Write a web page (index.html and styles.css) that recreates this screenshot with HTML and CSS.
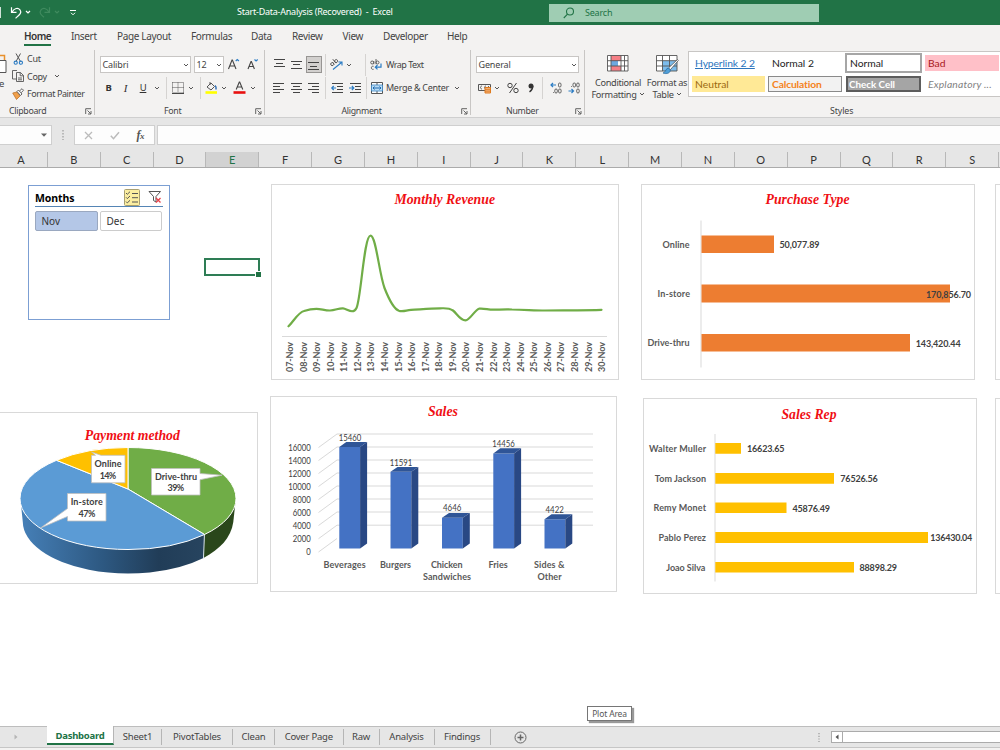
FILE: index.html
```html
<!DOCTYPE html>
<html lang="en">
<head>
<meta charset="utf-8">
<title>Start-Data-Analysis (Recovered) - Excel</title>
<link rel="stylesheet" href="styles.css">
</head>
<body>
<svg class="defs" width="0" height="0">
  <symbol id="caret" viewBox="0 0 6 6"><path d="M1 2l2 2 2-2" fill="none" stroke="#555" stroke-width="1"/></symbol>
  <symbol id="launch" viewBox="0 0 7 7"><path d="M.7 6V.7H6M2.5 2.5l3.3 3.3M6 3v3H3" fill="none" stroke="#555" stroke-width=".9"/></symbol>
</svg>

<header class="titlebar">
  <svg class="quick" width="90" height="25" viewBox="0 0 90 25" fill="none" stroke="#fff" stroke-width="1.2">
    <path d="M.2 7v11"/>
    <path d="M11.5 7.3v5h5M12 12c2.5-4 6-4.500 8-2.200 2.200 3-.5 5-4.500 8.500"/>
    <path d="M26 11l2 2 2-2"/>
    <g stroke="#3f8a5e"><path d="M49.500 7.300v5h-5M49 12c-2.500-4-6-4.500-8-2.200-2.200 3 0 5 3 7.500M55 11l2 2 2-2"/></g>
    <path d="M70 10.500h6M71 12.800l2 2 2-2" stroke-width="1"/>
  </svg>
  <div class="doc-title">Start-Data-Analysis (Recovered)&nbsp; -&nbsp; Excel</div>
  <div class="search">
    <svg width="12" height="12" viewBox="0 0 12 12" fill="none" stroke="#217346" stroke-width="1.1"><circle cx="7" cy="4.500" r="3.500"/><path d="M4.500 7.200L.8 11"/></svg>
    <span>Search</span>
  </div>
</header>

<nav class="ribbon-tabs">
  <span></span><a class="active">Home</a><a>Insert</a><a>Page Layout</a><a>Formulas</a><a>Data</a><a>Review</a><a>View</a><a>Developer</a><a>Help</a>
</nav>

<section class="ribbon">
  <div class="group clipboard">
    <div class="clip-body">
      <div class="paste">
        <svg width="8" height="24" viewBox="0 0 8 24" fill="none"><path d="M0 1.500h4.500v5" stroke="#e8912d" stroke-width="1.500"/><path d="M-1 6.500h7v12h-7" fill="#fff" stroke="#555"/></svg>
        <span>e</span>
      </div>
      <div class="clip-list">
        <div class="clip-item"><svg width="12" height="12" viewBox="0 0 12 12" fill="none"><path d="M4 .5l4.500 8M8.500 .5L4 8.500" stroke="#555"/><circle cx="3.700" cy="9.700" r="1.600" stroke="#2b7cc4" stroke-width="1.100"/><circle cx="8.900" cy="9.700" r="1.600" stroke="#2b7cc4" stroke-width="1.100"/></svg><span>Cut</span></div>
        <div class="clip-item"><svg width="12" height="12" viewBox="0 0 12 12" fill="#f3f2f1" stroke="#555" stroke-width=".9"><path d="M5 9H.5V.5H5"/><path d="M4.500 2.500h4L11.500 5.500v6h-7zM8.200 2.500v3.300h3.300M6 8h4M6 9.800h4"/></svg><span>Copy</span><svg class="gapcaret" width="6" height="6"><use href="#caret"/></svg></div>
        <div class="clip-item"><svg width="12" height="12" viewBox="0 0 12 12"><path d="M.7 5L5 4l3 4-3.500 3.500z" fill="#f0a04b" stroke="#b86a20" stroke-width=".7"/><path d="M5 3.500L6.500 2l3.500 4-1.500 1.500zM7.500 3L10 .7l1.500 1.500-2.200 2.500" fill="#fff" stroke="#555" stroke-width=".9"/></svg><span class="t-fp">Format Painter</span></div>
      </div>
    </div>
    <div class="caption cap-clip"><span>Clipboard</span><svg width="7" height="7"><use href="#launch"/></svg></div>
  </div>

  <div class="group font">
    <div class="row font1">
      <div class="combo"><span>Calibri</span><svg width="6" height="6"><use href="#caret"/></svg></div>
      <div class="combo"><span>12</span><svg width="6" height="6"><use href="#caret"/></svg></div>
      <svg width="13" height="13" viewBox="0 0 13 13" fill="none"><path d="M1.500 11L5 2h.4L9 11M2.800 8h5" stroke="#444" stroke-width="1.100"/><path d="M8.700 3l1.600-1.500L11.900 3" stroke="#2b7cc4" stroke-width="1.200"/></svg>
      <svg width="13" height="13" viewBox="0 0 13 13" fill="none"><path d="M1 11l3-7.500h.4l3 7.500M2.200 8.500h4" stroke="#444" stroke-width="1.100"/><path d="M7.500 1.500L9.100 3l1.600-1.500" stroke="#2b7cc4" stroke-width="1.200"/></svg>
    </div>
    <div class="row font2">
      <b>B</b><i>I</i><u>U</u><svg width="6" height="6"><use href="#caret"/></svg><hr>
      <svg width="12" height="12" viewBox="0 0 12 12" fill="none" stroke="#555"><path d="M.5.5h11v10M.5.5v10M6 .5v10M.5 5.500h11" stroke-dasharray="1 1"/><path d="M0 11.300h12" stroke="#333" stroke-width="1.200"/></svg>
      <svg width="6" height="6"><use href="#caret"/></svg><hr>
      <svg width="13" height="13" viewBox="0 0 13 13" fill="none"><path d="M2 6l4-4 3.500 3.500L6 9zM5 1v3" stroke="#555"/><path d="M10 4.500c1.500 1 1.200 2.500 1 4" stroke="#2b6cb4" stroke-width="1.500"/><path d="M.5 11.500h11.500" stroke="#ffff00" stroke-width="2.600"/></svg>
      <svg width="6" height="6"><use href="#caret"/></svg>
      <svg width="13" height="13" viewBox="0 0 13 13" fill="none"><path d="M3.200 8.500L6.300 1h.4l3.100 7.500M4.300 6h4.400" stroke="#444" stroke-width="1.100"/><path d="M.5 11.500h12" stroke="#e81010" stroke-width="2.600"/></svg>
      <svg width="6" height="6"><use href="#caret"/></svg>
    </div>
    <div class="caption cap-font"><span>Font</span><svg width="7" height="7"><use href="#launch"/></svg></div>
  </div>

  <div class="group align">
    <div class="row al1">
      <svg width="11" height="12" viewBox="0 0 11 12" stroke="#444" shape-rendering="crispEdges"><path d="M0 .5h11M2 4.500h7M0 7.500h11"/></svg>
      <svg width="11" height="12" viewBox="0 0 11 12" stroke="#444" shape-rendering="crispEdges"><path d="M0 2.500h11M2 5.500h7M0 9.500h11"/></svg>
      <span class="pressed"><svg width="11" height="12" viewBox="0 0 11 12" stroke="#444" shape-rendering="crispEdges"><path d="M0 5.500h11M2 9.500h7M0 12.500h11"/></svg></span>
      <hr>
      <svg width="13" height="12" viewBox="0 0 13 12" fill="none"><path d="M2 9.500l8.500-7M7.500 2H11v3.500" transform="translate(1 1)" stroke="#2b7cc4" stroke-width="1.100"/><g transform="rotate(-38 4 5)" stroke="#555" stroke-width=".9"><circle cx="2.500" cy="4" r="1.500"/><path d="M4 2.500v3M6 .5v5"/><circle cx="7.500" cy="4" r="1.500"/></g></svg>
      <svg width="6" height="6"><use href="#caret"/></svg><hr class="end">
      <svg width="12" height="12" viewBox="0 0 12 12" fill="none" stroke="#555" stroke-width=".9"><circle cx="2.200" cy="3.500" r="1.500"/><path d="M3.800 2v3.200M6 0v5.200M3.600 7.300c-3-.8-3 3.800 0 3"/><circle cx="7.500" cy="3.500" r="1.500"/><path d="M11 4.500v3.700H5.500M7.500 6L5.300 8.200l2.200 2.200" stroke="#2b7cc4" stroke-width="1.200"/></svg>
      <span class="lbl">Wrap Text</span>
    </div>
    <div class="row al2">
      <svg width="11" height="12" viewBox="0 0 11 12" stroke="#444" shape-rendering="crispEdges"><path d="M0 1.500h11M0 4.500h7M0 7.500h11M0 10.500h7"/></svg>
      <svg width="11" height="12" viewBox="0 0 11 12" stroke="#444" shape-rendering="crispEdges"><path d="M0 1.500h11M2 4.500h7M0 7.500h11M2 10.500h7"/></svg>
      <svg width="11" height="12" viewBox="0 0 11 12" stroke="#444" shape-rendering="crispEdges"><path d="M0 1.500h11M4 4.500h7M0 7.500h11M4 10.500h7"/></svg>
      <hr>
      <svg width="12" height="12" viewBox="0 0 12 12" fill="none"><path d="M1 1.500h11M6 4.500h6M6 7.500h6M1 10.500h11" stroke="#444"/><path d="M5 6H1M2.700 4L.8 6l1.900 2" stroke="#2b7cc4" stroke-width="1.200"/></svg>
      <svg width="12" height="12" viewBox="0 0 12 12" fill="none"><path d="M1 1.500h11M6 4.500h6M6 7.500h6M1 10.500h11" stroke="#444"/><path d="M0 6h4.500M2.900 4l1.900 2-1.900 2" stroke="#2b7cc4" stroke-width="1.200"/></svg>
      <hr>
      <svg width="12" height="12" viewBox="0 0 12 12" fill="none"><path d="M.5.500h11v11H.5zM6 .5v11" fill="#fff" stroke="#555"/><path d="M.5 3h11v6H.5z" fill="#b9dcf5" stroke="#3a87c4" stroke-width=".8"/><path d="M2 6h8M3.500 4.500L2 6l1.500 1.500M8.500 4.500L10 6 8.500 7.500" stroke="#1f6bb0"/></svg>
      <span class="lbl">Merge &amp; Center</span>
      <svg width="6" height="6"><use href="#caret"/></svg>
    </div>
    <div class="caption cap-align"><span>Alignment</span><svg width="7" height="7"><use href="#launch"/></svg></div>
  </div>

  <div class="group number">
    <div class="row nu1"><div class="combo"><span>General</span><svg width="6" height="6"><use href="#caret"/></svg></div></div>
    <div class="row nu2">
      <svg width="13" height="12" viewBox="0 0 13 12" fill="none"><path d="M.5 2.500h12v6H.5z" stroke="#555"/><path d="M4 4c-2 0-2 3 0 3M8 4c-2 0-2 3 0 3M10.500 4v3" stroke="#555" stroke-width=".9"/><path d="M7 5.500h5.500v5.500H7z" fill="#f3b27a" stroke="#e07b1e"/><path d="M7 7.400h5.500M7 9.200h5.500" stroke="#e07b1e" stroke-width=".8"/></svg>
      <svg width="6" height="6"><use href="#caret"/></svg>
      <svg width="12" height="12" viewBox="0 0 12 12" fill="none" stroke="#444"><circle cx="3" cy="3.500" r="2.200"/><circle cx="9" cy="8.500" r="2.200"/><path d="M9.500 1L2.500 11"/></svg>
      <svg width="8" height="12" viewBox="0 0 8 12"><circle cx="4" cy="4" r="2.500" fill="#333"/><path d="M5.700 4c0 3-1.200 4.600-3.200 5.800" fill="none" stroke="#333" stroke-width="1.500"/></svg>
      <hr>
      <svg width="12" height="12" viewBox="0 0 12 12" fill="none" stroke="#555" stroke-width=".9"><path d="M6 3H1M3 1L1 3l2 2" stroke="#2b7cc4" stroke-width="1.200"/><rect x="8.500" y="1" width="2.500" height="4" rx="1.200"/><rect x="4.800" y="7" width="2.500" height="4" rx="1.200"/><rect x="8.600" y="7" width="2.500" height="4" rx="1.200"/><path d="M3 10.500h.8"/></svg>
      <svg width="12" height="12" viewBox="0 0 12 12" fill="none" stroke="#555" stroke-width=".9"><path d="M.5 9h5M3.500 7l2 2-2 2" stroke="#2b7cc4" stroke-width="1.200"/><rect x="5" y="1" width="2.500" height="4" rx="1.200"/><rect x="8.700" y="1" width="2.500" height="4" rx="1.200"/><rect x="8.700" y="7" width="2.500" height="4" rx="1.200"/><path d="M3 4.500h.8"/></svg>
    </div>
    <div class="caption cap-num"><span>Number</span><svg width="7" height="7"><use href="#launch"/></svg></div>
  </div>

  <div class="group styles">
    <div class="styles-body">
      <div class="big cond">
        <svg width="22" height="19" viewBox="0 0 22 19"><path d="M.5 1.500h20.500v15.500H.5z" fill="#fff"/><path d="M4 1.500h10V7H4zM4 12h10v5H4z" fill="#f57f86"/><path d="M4 7h7v5H4z" fill="#6fa9e0"/><path d="M11 7h3v5h-3z" fill="#fff"/><path d="M.5 1.500h20.500v15.500H.5zM.5 6.700H21M.5 12H21M4 1.500V17M14 1.500V17M17.500 1.500V17" fill="none" stroke="#555" stroke-width=".9"/></svg>
        <span>Conditional</span><span>Formatting <svg width="6" height="6"><use href="#caret"/></svg></span>
      </div>
      <div class="big fmt">
        <svg width="23" height="19" viewBox="0 0 23 19"><path d="M.5 1.500h20.500v15.500H.5z" fill="#fff"/><path d="M6.500 6.700H21V17H6.500z" fill="#7cbcec"/><path d="M.5 1.500h20.500v15.500H.5zM.5 6.700H21M.5 12H21M6.500 1.500V17M13.500 1.500V17" fill="none" stroke="#555" stroke-width=".9"/><path d="M21.500 5.500L12.500 14l1.800 1.800 8-9.300z" fill="#fff" stroke="#555" stroke-width=".8"/><path d="M12.500 14c-3 0-2 4-5.500 5 4 1.500 7.500 0 7.300-3.200z" fill="#4f9fd8" stroke="#23679f" stroke-width=".7"/></svg>
        <span>Format as</span><span>Table <svg width="6" height="6"><use href="#caret"/></svg></span>
      </div>
      <div class="gallery">
        <div class="st hyper"><span>Hyperlink 2 2</span></div><div class="st n2"><span>Normal 2</span></div><div class="st normal"><span>Normal</span></div><div class="st bad"><span>Bad</span></div>
        <div class="st neutral"><span>Neutral</span></div><div class="st calc"><span>Calculation</span></div><div class="st check"><span>Check Cell</span></div><div class="st expl"><span>Explanatory ...</span></div>
      </div>
    </div>
    <div class="caption cap-styles"><span>Styles</span></div>
  </div>
</section>

<section class="formula-bar">
  <div class="namebox"><svg width="6" height="4" viewBox="0 0 6 4"><path d="M0 .5h6L3 3.800z" fill="#666"/></svg></div>
  <svg width="4" height="10" viewBox="0 0 4 10"><path d="M2 0v10" stroke="#aaa" stroke-width="1.500" stroke-dasharray="1.500 1.500"/></svg>
  <div class="fx">
    <svg width="9" height="9" viewBox="0 0 9 9"><path d="M1 1l7 7M8 1L1 8" stroke="#bbb" stroke-width="1.300"/></svg>
    <svg width="10" height="9" viewBox="0 0 10 9"><path d="M.8 4.800l2.700 2.900L9 1.200" fill="none" stroke="#bbb" stroke-width="1.500"/></svg>
    <em>f<small>x</small></em>
  </div>
  <div class="formula"></div>
</section>

<div class="columns">
  <span>A</span><span>B</span><span>C</span><span>D</span><span class="sel">E</span><span>F</span><span>G</span><span>H</span><span>I</span><span>J</span><span>K</span><span>L</span><span>M</span><span>N</span><span>O</span><span>P</span><span>Q</span><span>R</span><span>S</span><span></span>
</div>

<main class="sheet">
  <div class="slicer">
    <div class="slicer-head">
      <b>Months</b>
      <svg width="16" height="17" viewBox="0 0 16 17" fill="none"><rect x=".5" y=".5" width="15" height="16" rx="1" fill="#fbeea0" stroke="#a89f72"/><path d="M2 4l1.300 1.300L6 2.700M2 8.300l1.300 1.300L6 7M2 12.600l1.300 1.300L6 11.300M8 4.500h6M8 8.700h6M8 13h6" stroke="#555"/></svg>
      <svg width="14" height="14" viewBox="0 0 14 14" fill="none"><path d="M1 1.500h11.500L8 6.500V12L5.500 10.500v-4z" stroke="#555"/><path d="M8 8l4.500 4.500M12.500 8L8 12.500" stroke="#e8414a" stroke-width="1.300"/></svg>
    </div>
    <div class="slicer-items"><span class="on">Nov</span><span>Dec</span></div>
  </div>

  <div class="cell-cursor"></div>

  <svg class="chart revenue" viewBox="271 184 348 196">
    <text class="ct" x="394.500" y="204.300" textLength="100.500" lengthAdjust="spacingAndGlyphs">Monthly Revenue</text>
    <path d="M282 336.500h325" stroke="#d9d9d9"/>
    <path d="M288.500 326.300C294 321 298 312.500 304 311C309 309.300 313 308.800 316.500 308.800C321 308.800 325 310.600 330 310.500C335 310.400 339 308 343 308.300C347 308.600 353 315 356.500 308C361 299 364 235.700 370.500 235.700C376 235.700 379 273 384.500 288C388 297 394 309 399 310.800C404 311.800 406 310.200 411 309.900C420 309.400 430 308.400 440 308.300C445 308.300 449 307.600 453 310.500C457 313.500 460 320.300 465.500 320.300C470 320.300 475 309.600 479 308.700C483 308 488 309.600 493 309.700C500 309.600 505 309.200 512 309.500C525 309.700 535 310.500 545 310.500C560 310.300 590 310.300 601.500 309.800" fill="none" stroke="#70ad47" stroke-width="2.200" stroke-linecap="round"/>
    <g class="days">
      <text transform="translate(293 372) rotate(-90)" textLength="30">07-Nov</text>
      <text transform="translate(306.600 372) rotate(-90)" textLength="30">08-Nov</text>
      <text transform="translate(320.100 372) rotate(-90)" textLength="30">09-Nov</text>
      <text transform="translate(333.700 372) rotate(-90)" textLength="30">10-Nov</text>
      <text transform="translate(347.300 372) rotate(-90)" textLength="30">11-Nov</text>
      <text transform="translate(360.800 372) rotate(-90)" textLength="30">12-Nov</text>
      <text transform="translate(374.400 372) rotate(-90)" textLength="30">13-Nov</text>
      <text transform="translate(388 372) rotate(-90)" textLength="30">14-Nov</text>
      <text transform="translate(401.500 372) rotate(-90)" textLength="30">15-Nov</text>
      <text transform="translate(415.100 372) rotate(-90)" textLength="30">16-Nov</text>
      <text transform="translate(428.700 372) rotate(-90)" textLength="30">17-Nov</text>
      <text transform="translate(442.200 372) rotate(-90)" textLength="30">18-Nov</text>
      <text transform="translate(455.800 372) rotate(-90)" textLength="30">19-Nov</text>
      <text transform="translate(469.400 372) rotate(-90)" textLength="30">20-Nov</text>
      <text transform="translate(482.900 372) rotate(-90)" textLength="30">21-Nov</text>
      <text transform="translate(496.500 372) rotate(-90)" textLength="30">22-Nov</text>
      <text transform="translate(510.100 372) rotate(-90)" textLength="30">23-Nov</text>
      <text transform="translate(523.600 372) rotate(-90)" textLength="30">24-Nov</text>
      <text transform="translate(537.200 372) rotate(-90)" textLength="30">25-Nov</text>
      <text transform="translate(550.800 372) rotate(-90)" textLength="30">26-Nov</text>
      <text transform="translate(564.300 372) rotate(-90)" textLength="30">27-Nov</text>
      <text transform="translate(577.900 372) rotate(-90)" textLength="30">28-Nov</text>
      <text transform="translate(591.500 372) rotate(-90)" textLength="30">29-Nov</text>
      <text transform="translate(605 372) rotate(-90)" textLength="30">30-Nov</text>
    </g>
  </svg>

  <svg class="chart purchase" viewBox="641 184 334 196">
    <text class="ct" x="765.500" y="204.300" textLength="84" lengthAdjust="spacingAndGlyphs">Purchase Type</text>
    <path d="M701 220.500v147" stroke="#d9d9d9"/>
    <g fill="#ed7d31"><path d="M701.500 235.500h72.500v17.500h-72.500zM701.500 284.500H950v18H701.500zM701.500 334H910v17.500H701.500z"/></g>
    <g class="cat">
      <text x="662.500" y="247.700" textLength="27">Online</text>
      <text x="657.500" y="297" textLength="32.500">In-store</text>
      <text x="647.500" y="346" textLength="42">Drive-thru</text>
    </g>
    <g class="val">
      <text x="779.500" y="248.300" textLength="40">50,077.89</text>
      <text x="926" y="297.500" textLength="45">170,856.70</text>
      <text x="915.700" y="346.700" textLength="45">143,420.44</text>
    </g>
  </svg>

  <svg class="chart sales" viewBox="270 396 347 196">
    <text class="ct" x="428" y="416.300" textLength="30" lengthAdjust="spacingAndGlyphs">Sales</text>
    <path d="M318.500 447.500l18.500-13.500h256M318.500 460.500l18.500-13.500h256M318.500 473.500l18.500-13.500h256M318.500 486.500l18.500-13.500h256M318.500 499.500l18.500-13.500h256M318.500 512.500l18.500-13.500h256M318.500 525.500l18.500-13.500h256M318.500 538.700l18.500-13.500h256M318.500 552l18.500-13.500" fill="none" stroke="#d9d9d9"/>
    <path fill="#4472c4" d="M339.300 447h20.800v101.500h-20.800zM390.500 471.800h20.800v76.700h-20.800zM442 517.800h20.800v30.700H442zM493.300 453.500h20.800v95h-20.800zM544.500 519.300h20.800v29.200h-20.800z"/>
    <path fill="#2f5597" d="M339.300 447l7-5h20.800l-7 5zM390.500 471.800l7-4.800h20.800l-7 4.800zM442 517.800l7-4.800h20.800l-7 4.800zM493.300 453.500l7-5.200h20.800l-7 5.200zM544.500 519.300l7-5h20.800l-7 5z"/>
    <path fill="#294884" d="M360.100 447l7-5v101.500l-7 5zM411.300 471.800l7-4.800v76.500l-7 5zM462.800 517.800l7-4.800v30.500l-7 5zM514.100 453.500l7-5.200v95.200l-7 5zM565.300 519.300l7-5v29.200l-7 5z"/>
    <g class="axis">
      <text x="288.300" y="451" textLength="22.500" lengthAdjust="spacingAndGlyphs">16000</text>
      <text x="288.300" y="463.500" textLength="22.500" lengthAdjust="spacingAndGlyphs">14000</text>
      <text x="288.300" y="476.500" textLength="22.500" lengthAdjust="spacingAndGlyphs">12000</text>
      <text x="288.300" y="489.700" textLength="22.500" lengthAdjust="spacingAndGlyphs">10000</text>
      <text x="292.800" y="502.800" textLength="18" lengthAdjust="spacingAndGlyphs">8000</text>
      <text x="292.800" y="515.800" textLength="18" lengthAdjust="spacingAndGlyphs">6000</text>
      <text x="292.800" y="529" textLength="18" lengthAdjust="spacingAndGlyphs">4000</text>
      <text x="292.800" y="541.800" textLength="18" lengthAdjust="spacingAndGlyphs">2000</text>
      <text x="306.300" y="555.200" textLength="4.500" lengthAdjust="spacingAndGlyphs">0</text>
      <text x="338.700" y="440.600" textLength="22.500" lengthAdjust="spacingAndGlyphs">15460</text>
      <text x="389.800" y="465.600" textLength="22.500" lengthAdjust="spacingAndGlyphs">11591</text>
      <text x="443" y="511.400" textLength="18.300" lengthAdjust="spacingAndGlyphs">4646</text>
      <text x="492.300" y="447.400" textLength="22.500" lengthAdjust="spacingAndGlyphs">14456</text>
      <text x="545.500" y="512.600" textLength="18.300" lengthAdjust="spacingAndGlyphs">4422</text>
    </g>
    <g class="cat">
      <text x="323.600" y="568.200" textLength="42">Beverages</text>
      <text x="380" y="568.200" textLength="31">Burgers</text>
      <text x="431" y="568.200" textLength="31.500">Chicken</text>
      <text x="423" y="580" textLength="48">Sandwiches</text>
      <text x="488.500" y="568.200" textLength="19.200">Fries</text>
      <text x="534" y="568.200" textLength="30.500">Sides &amp;</text>
      <text x="537.500" y="580" textLength="24">Other</text>
    </g>
  </svg>

  <svg class="chart rep" viewBox="643 398 334 196">
    <text class="ct" x="781.500" y="418.500" textLength="55" lengthAdjust="spacingAndGlyphs">Sales Rep</text>
    <path d="M715 434v147.500" stroke="#d9d9d9"/>
    <path fill="#ffc000" d="M715.300 443H741v10.700h-25.700zM715.300 473H834v10.700H715.300zM715.300 502.500h71.200v10.500h-71.200zM715.300 532H928v11H715.300zM715.300 562H854v10.500H715.300z"/>
    <g class="cat">
      <text x="649" y="451.500" textLength="57">Walter Muller</text>
      <text x="654.800" y="481.700" textLength="51.200">Tom Jackson</text>
      <text x="653.500" y="511" textLength="52.500">Remy Monet</text>
      <text x="658.500" y="540.500" textLength="47.500">Pablo Perez</text>
      <text x="666.300" y="570.500" textLength="39">Joao Silva</text>
    </g>
    <g class="val">
      <text x="747" y="452.200" textLength="37.500">16623.65</text>
      <text x="840.300" y="482.200" textLength="37.500">76526.56</text>
      <text x="792.500" y="511.700" textLength="37.500">45876.49</text>
      <text x="930.300" y="541.200" textLength="42">136430.04</text>
      <text x="859.500" y="571.200" textLength="37.500">88898.29</text>
    </g>
  </svg>

  <svg class="chart payment" viewBox="-1 412 259 172">
    <defs>
      <linearGradient id="rim" x1="20" x2="205" y1="0" y2="0" gradientUnits="userSpaceOnUse"><stop offset="0" stop-color="#4680b8"/><stop offset=".45" stop-color="#2d5881"/><stop offset=".75" stop-color="#213d58"/><stop offset="1" stop-color="#27445f"/></linearGradient>
    </defs>
    <text class="ct" x="84.800" y="439.800" textLength="95" lengthAdjust="spacingAndGlyphs">Payment method</text>
    <path d="M20.500 500L22.800 522A105.500 52 0 0 0 203.500 558L205 530z" fill="url(#rim)"/>
    <path d="M204.500 530L203.500 558C220 549 231 538 233.300 522L235.700 500z" fill="#2a471b"/>
    <path d="M204.500 533L203.500 558" stroke="#d7e3ee"/>
    <g stroke="#fff" stroke-width="1">
      <path d="M128 489V447.500A108 51 0 0 1 236 498.500A108 51 0 0 1 204.500 534.500z" fill="#70ad47"/>
      <path d="M128 489L204.500 534.500A108 51 0 0 1 128 549.500A108 51 0 0 1 20 498.500A108 51 0 0 1 56.500 460.300z" fill="#5b9bd5"/>
      <path d="M128 489L56.500 460.300A108 51 0 0 1 128 447.500z" fill="#ffc000"/>
    </g>
    <g fill="#fff" stroke="#bfbfbf" stroke-width=".8">
      <path d="M91.500 455.300h4L91.500 452l9.500 3.300h24v27.500H91.500z"/>
      <path d="M151.500 468.500H200v5l22 1.700-22 4.500v15.300h-48.500z"/>
      <path d="M67.500 493.500H106v27.500H67.500v-4.500L40.500 528l27-19.500z"/>
    </g>
    <g class="cat dark">
      <text x="94.500" y="467" textLength="27">Online</text>
      <text x="99.700" y="478.800" textLength="16.500">14%</text>
      <text x="155" y="479.500" textLength="42">Drive-thru</text>
      <text x="167.500" y="491.300" textLength="16.700">39%</text>
      <text x="70.700" y="505.300" textLength="32">In-store</text>
      <text x="78.500" y="517" textLength="17">47%</text>
    </g>
  </svg>

  <div class="edge upper"></div>
  <div class="edge lower"></div>
  <div class="tooltip">Plot Area</div>
</main>

<footer class="sheet-tabs">
  <span class="nav"><svg width="4" height="6" viewBox="0 0 4 6"><path d="M.5.5L3.500 3l-3 2.500z" fill="#b5b5b5"/></svg></span>
  <span class="cur">Dashboard</span><span>Sheet1</span><span>PivotTables</span><span>Clean</span><span>Cover Page</span><span>Raw</span><span>Analysis</span><span>Findings</span>
  <div class="add"><svg width="13" height="13" viewBox="0 0 13 13" fill="none" stroke="#666"><circle cx="6.500" cy="6.500" r="5.500"/><path d="M3.500 6.500h6M6.500 3.500v6" stroke-width="1.500"/></svg></div>
  <svg width="4" height="9" viewBox="0 0 4 9"><path d="M2 0v9" stroke="#999" stroke-width="1.200" stroke-dasharray="1.200 1.500"/></svg>
  <div class="scroll"><div class="arrow"><svg width="4" height="6" viewBox="0 0 4 6"><path d="M3.500.5L.5 3l3 2.500z" fill="#555"/></svg></div></div>
</footer>
</body>
</html>
```

FILE: styles.css
```css
* { box-sizing: border-box; }
html, body { margin: 0; }
body {
  width: 1000px; height: 750px; overflow: hidden;
  display: flex; flex-direction: column;
  background: #f3f2f1;
  font-family: "Noto Sans", "Open Sans", sans-serif;
  font-size: 9.500px; color: #444; letter-spacing: -.2px;
  white-space: nowrap;
}
svg { display: block; flex: none; overflow: visible; }
.defs { position: absolute; }
hr { width: 1px; height: 22px; margin: 0; border: 0; background: #d5d3d1; }

.titlebar {
  height: 25px; flex: none; background: #217346; color: #fff;
  display: grid; grid-template-columns: 237px 312px 270px; align-items: center;
}
.doc-title { font-size: 9px; letter-spacing: -.24px; margin-top: -2px; }
.search {
  height: 18px; background: #9fcdb3; color: #217346;
  display: flex; align-items: center; gap: 10px; padding-left: 14px; font-size: 9px;
}

.ribbon-tabs {
  height: 25px; flex: none; display: grid; font-size: 10px; letter-spacing: -.35px;
  grid-template-columns: 24px 47px 46px 74px 60px 41px 50.500px 40.500px 64px 60px;
  align-items: start; padding-top: 2px;
}
.ribbon-tabs a { line-height: 19px; justify-self: start; }
.ribbon-tabs .active { color: #333; font-weight: 600; border-bottom: 2px solid #217346; line-height: 17px; height: 18px; margin-top: 1px; letter-spacing: -.55px; }

.ribbon {
  height: 68px; flex: none; display: grid; border-bottom: 1px solid #cfcfcf;
  grid-template-columns: 95px 170px 206px 114px 415px; letter-spacing: -.3px;
}
.group { height: 65px; display: flex; flex-direction: column; border-right: 1px solid #c8c6c4; min-width: 0; }
.group.styles { border-right: 0; }
.row { display: grid; align-items: center; justify-items: center; height: 23px; }
.caption { margin-top: auto; height: 13px; line-height: 13px; font-size: 8.800px; display: flex; align-items: center; justify-content: space-between; margin-bottom: -3px; padding-right: 2px; }
.cap-clip { padding-left: 9px; }
.cap-font { padding-left: 69px; }
.cap-align { padding-left: 76.500px; }
.cap-num { padding-left: 35px; }
.cap-styles { padding-left: 245px; letter-spacing: -.1px; }

.clip-body { display: flex; }
.paste { width: 12px; padding-top: 4px; line-height: 9px; }
.paste span { display: block; margin-top: 1px; margin-left: -1px; }
.clip-list { display: flex; flex-direction: column; }
.clip-item { height: 17.500px; display: flex; align-items: center; gap: 3px; font-size: 9px; }
.gapcaret { margin-left: 4px; }
.t-fp { letter-spacing: -.42px; }

.combo { justify-self: stretch; height: 17px; background: #fff; border: 1px solid #c8c6c4; display: flex; align-items: center; justify-content: space-between; padding: 0 1px 0 1.500px; font-size: 9px; letter-spacing: -.15px; }
.font1 { margin-top: 3px; padding-left: 5px; grid-template-columns: 91px 30px 13px 13px; column-gap: 3px; justify-content: start; }
.font1 svg:last-child { margin-left: 8px; }
.font2 { padding-left: 5px; font-size: 9.500px; color: #333; justify-content: start;
  grid-template-columns: 17px 17px 18px 9px 11px 11px 15px 5px 17px 8px 23px 4px; }
.font2 i { font-family: "Liberation Serif", serif; font-size: 11px; }
.al1, .al2 { justify-content: start; padding-left: 5px; grid-template-columns: 18px 17px 17.500px 5px 18.500px 5px 15px 20px auto; }
.al1 { margin-top: 3px; }
.al1 .end { justify-self: end; }
.al2 { grid-template-columns: 18px 17px 18px 5px 18px 18px 5px 16px 69px auto; padding-left: 4.500px; }
.al1 .lbl, .al2 .lbl { justify-self: start; font-size: 9px; }
.al2 .lbl { padding-left: 1.500px; }
.al1 .lbl { letter-spacing: -.5px; }
.pressed { width: 16px; height: 17px; background: #d2d0ce; border: 1px solid #979593; padding: 0 0 0 1.500px; }
.number .nu1 { margin-top: 3px; padding-left: 5px; padding-right: 5px; }
.nu2 { justify-content: start; padding-left: 6px; grid-template-columns: 15px 10px 22px 14px 9px 18px 18px; }
.nu1 { grid-template-columns: 103px; }

.styles-body { display: grid; grid-template-columns: 60px 38px 1fr; padding-left: 3px; }
.big { display: flex; flex-direction: column; align-items: center; padding-top: 4px; font-size: 9.200px; letter-spacing: -.3px; }
.big > svg { margin-bottom: 4px; height: 19px; }
.big span { line-height: 11.500px; display: flex; align-items: center; gap: 2px; }
.gallery {
  margin: 1px 0 0 2px; height: 46px; background: #fff; border: 1px solid #c8c6c4; border-right: 0;
  display: grid; grid-template-columns: 73px 74px 77px 74px; grid-template-rows: 19px 17px; column-gap: 3px; row-gap: 3px; padding: 2px 0 0 3px;
  font-family: Lato, sans-serif; font-size: 10.300px; color: #222; letter-spacing: 0;
}
.st { display: flex; align-items: center; padding-left: 3px; margin: 0 0 1px; }
.st.hyper span { color: #2b74bd; text-decoration: underline; letter-spacing: -.1px; }
.n2 { padding-left: 4px; }
.normal { border: 2px solid #a6a6a6; margin: -1px 0 0; }
.bad { background: #ffc0c8; color: #a81820; margin: 1px 0 2px; }
.neutral { background: #ffe996; color: #9c6a10; }
.calc { background: #f2f2f2; border: 1px solid #8a8a8a; color: #f58220; font-weight: bold; letter-spacing: -.15px; }
.check { background: #a5a5a5; border: 2px solid #5d5d5d; color: #fff; font-weight: bold; font-size: 9.800px; padding-left: 1px; margin-left: 1px; margin-right: 1px; }
.expl { color: #7f7f7f; font-style: italic; letter-spacing: .2px; }

.formula-bar { height: 34px; flex: none; background: #e6e6e6; display: grid; grid-template-columns: 52px 22px 81px 2px 1fr; align-items: center; justify-items: center; }
.namebox, .fx, .formula { height: 20px; justify-self: stretch; background: #fdfdfd; border: 1px solid #cfcfcf; display: flex; align-items: center; }
.namebox { border-left: 0; justify-content: flex-end; padding-right: 4px; }
.fx { justify-content: space-between; padding: 0 10px 0 9px; }
.fx em { font: italic 600 12px "Liberation Serif", serif; color: #555; line-height: 12px; letter-spacing: -.5px; }
.fx small { font-size: 9px; }
.formula { grid-column: 5; border-right: 0; }

.columns {
  height: 15.500px; flex: none; background: #e6e6e6; border-bottom: 1px solid #ababab;
  display: grid; grid-template-columns: repeat(20, 52.850px); margin-left: -5px; width: 1010px; overflow: hidden;
}
.columns span { border-right: 1px solid #b8b8b8; text-align: center; font: 11px/16px Lato, sans-serif; color: #333; letter-spacing: 0; }
.columns .sel { background: #d2d2d2; color: #217346; border-bottom: 2px solid #217346; }

.sheet { height: 558.500px; flex: none; background: #fff; position: relative; overflow: hidden; }
.chart { position: absolute; outline: 1px solid #d9d9d9; outline-offset: -1px; background: #fff; }
.revenue { left: 271px; top: 16.500px; width: 348px; height: 196px; }
.purchase { left: 641px; top: 16.500px; width: 334px; height: 196px; }
.sales { left: 270px; top: 228.500px; width: 347px; height: 196px; }
.rep { left: 643px; top: 230.500px; width: 334px; height: 196px; }
.payment { left: -1px; top: 244.500px; width: 259px; height: 172px; }
.edge { position: absolute; left: 995px; width: 10px; height: 196px; border: 1px solid #d9d9d9; }
.upper { top: 16.500px; }
.lower { top: 230px; }
.ct { font: italic bold 14px "Liberation Serif", serif; fill: #f00f14; letter-spacing: 0; }
.cat, .val, .axis, .days { font: bold 9px Lato, sans-serif; fill: #595959; letter-spacing: 0; }
.val, .dark { fill: #404040; }
.axis { font-weight: normal; fill: #404040; }

.slicer { position: absolute; left: 28px; top: 17.500px; width: 142px; height: 135px; border: 1px solid #7c9fd3; padding: 3px 6px; }
.slicer-head { height: 18px; border-bottom: 1px solid #5585b5; display: grid; grid-template-columns: 89px 24px 14px; align-items: center; color: #000; font-size: 10.500px; letter-spacing: -.1px; }
.slicer-head svg { margin-top: -1px; }
.slicer-items { display: grid; grid-template-columns: 63px 62px; column-gap: 2px; padding-top: 4px; font-size: 10px; color: #333; }
.slicer-items span { height: 20px; line-height: 18px; border: 1px solid #ccc; border-radius: 2px; padding-left: 5.500px; letter-spacing: 0; }
.slicer-items .on { background: #b4c7e7; border-color: #9aa8c0; }

.cell-cursor { position: absolute; left: 204px; top: 90.500px; width: 56px; height: 18px; border: 2px solid #2e7d55; }
.cell-cursor::after { content: ""; position: absolute; right: -3px; bottom: -3px; width: 5px; height: 5px; background: #217346; border: solid #fff; border-width: 1px 0 0 1px; }
.tooltip { position: absolute; left: 587px; top: 538.500px; width: 45px; height: 15px; border: 1px solid #767676; background: #fff; box-shadow: 2px 2px 1px #999; line-height: 13px; text-align: center; font-size: 8.500px; letter-spacing: -.15px; color: #575757; }

.sheet-tabs {
  height: 22px; flex: none; background: #e6e6e6; border-top: 1px solid #bdbdbd; border-bottom: 1px solid #c6c6c6;
  display: grid; align-items: center; justify-items: center;
  grid-template-columns: 47px 67px 48px 71px 42px 68.500px 36px 55px 56px 59px 267px 4px 1fr;
}
.sheet-tabs > span { justify-self: stretch; text-align: center; border-right: 1px solid #b5b5b5; height: 16px; line-height: 16px; font-size: 9.500px; letter-spacing: -.22px; }
.sheet-tabs > .nav { border: 0; display: flex; align-items: center; justify-content: center; padding-right: 15px; }
.sheet-tabs > .cur { align-self: start; margin-top: -1px; height: 19px; line-height: 20px; background: #fff; color: #217346; font-weight: bold; border-bottom: 2px solid #217346; letter-spacing: -.25px; }
.sheet-tabs > svg { grid-column: 12; }
.scroll { justify-self: stretch; margin-left: 10px; height: 12px; background: #fff; border: 1px solid #ababab; border-right: 0; }
.arrow { width: 11px; height: 10px; border-right: 1px solid #ababab; display: flex; align-items: center; justify-content: center; }
```
